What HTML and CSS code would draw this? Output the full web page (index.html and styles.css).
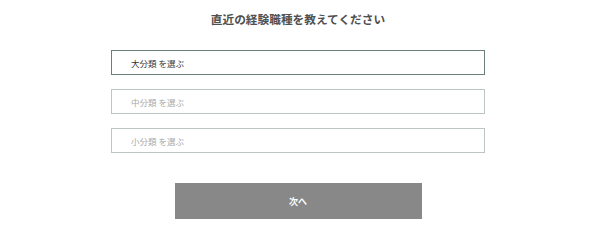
FILE: index.html
```html
<!DOCTYPE html>
<html lang="ja">
<head>
<meta charset="utf-8">
<link rel="stylesheet" href="styles.css">
</head>
<body>
<div class="page">
  <h1 class="title">直近の経験職種を教えてください</h1>
  <div class="fields">
    <div class="field field-active">大分類 を選ぶ</div>
    <div class="field">中分類 を選ぶ</div>
    <div class="field">小分類 を選ぶ</div>
  </div>
  <div class="next">次へ</div>
</div>
</body>
</html>
```
FILE: styles.css
```css
html, body {
  margin: 0;
  padding: 0;
  background: #ffffff;
}
body {
  font-family: "Noto Sans CJK JP", "Noto Sans", sans-serif;
}
.page {
  width: 596px;
  display: flex;
  flex-direction: column;
  align-items: center;
  padding-top: 12px;
}
.title {
  margin: 0 0 24px 0;
  font-size: 11.7px;
  line-height: 14px;
  font-weight: 700;
  color: #505050;
}
.fields {
  display: flex;
  flex-direction: column;
  gap: 14px;
}
.field {
  box-sizing: border-box;
  width: 374px;
  height: 25px;
  border: 1px solid #bcc6c6;
  padding-left: 19px;
  display: flex;
  align-items: center;
  font-size: 8.5px;
  color: #a8a8a8;
  background: #fff;
}
.field-active {
  border-color: #6c7f7d;
  color: #333333;
}
.next {
  margin-top: 30px;
  width: 247px;
  height: 36px;
  background: #888888;
  color: #ffffff;
  font-size: 9px;
  font-weight: 700;
  display: flex;
  align-items: center;
  justify-content: center;
}
```
